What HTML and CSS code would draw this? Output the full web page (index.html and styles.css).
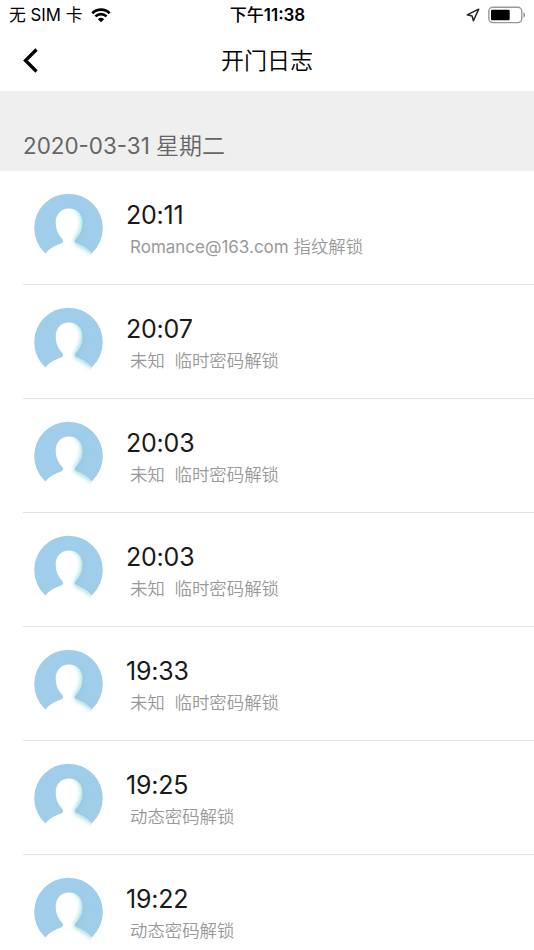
FILE: index.html
```html
<!DOCTYPE html>
<html lang="zh-CN">
<head>
<meta charset="UTF-8" />
<meta name="viewport" content="width=device-width, initial-scale=1" />
<title>开门日志</title>
<link rel="stylesheet" href="styles.css">
</head>
<body>

<!-- shared avatar -->
<svg class="defs" width="0" height="0">
  <defs>
    <filter id="glow" x="-30%" y="-30%" width="160%" height="160%">
      <feGaussianBlur stdDeviation="2" />
    </filter>
    <path id="person" d="M35 15.500c8 0 13.300 6 13.300 14 0 8-3.300 12.500-6.300 16-1.600 2-1.600 3.600.3 4.800C47 52 53 54.500 58 61l-2 7H12l-1-7C16 54.500 23 52 27.700 50.300c1.900-1.200 1.900-2.800.3-4.800-3-3.500-6.300-8-6.300-16C21.700 21.500 27 15.500 35 15.500z" />
    <clipPath id="cut"><path d="M0 0H69V61H0z" /></clipPath>
    <clipPath id="inside"><use href="#person" /></clipPath>
    <symbol id="avatar" viewBox="0 0 69 69">
      <g clip-path="url(#cut)">
        <circle cx="34.500" cy="35" r="34.300" fill="#9fcdea" />
        <path d="M37 17c8 0 13 6 13 14s-4 13-6 16v4c3 4 7 4 11 9H36z" fill="#8ccbd8" opacity="0.6" filter="url(#glow)" />
      </g>
      <use href="#person" fill="#fff" />
      <g clip-path="url(#inside)">
        <path d="M40 14c6 2 9.500 8 9.500 15.500 0 8-3.800 12.500-6.300 16.500-1.300 2.300-1 3 .6 4C47 51.500 53 53.500 59 60" fill="none" stroke="#a5dcdf" stroke-width="5" filter="url(#glow)" />
      </g>
    </symbol>
  </defs>
</svg>

<div class="status">
  <div class="carrier">
    <span>无 SIM 卡</span>
    <svg class="wifi" width="20" height="15" viewBox="0 0 20 15">
      <path d="M1.300 5.200a12.300 12.300 0 0 1 17.400 0M4.400 8.400a8 8 0 0 1 11.200 0" fill="none" stroke="#000" stroke-width="2.700" />
      <path d="M10 14.300l-3.100-3.100a4.500 4.500 0 0 1 6.200 0z" />
    </svg>
  </div>
  <div class="clock">下午<b>11:38</b></div>
  <div class="indicators">
    <svg width="14" height="14" viewBox="0 0 14 14">
      <path d="M12.700 1.200L1.200 6.800l4.900 1.100 1.300 4.900z" fill="none" stroke="#222" stroke-width="1.500" stroke-linejoin="round" />
    </svg>
    <svg width="38" height="18" viewBox="0 0 38 18">
      <rect x="0.800" y="1.300" width="33" height="15.300" rx="4" fill="none" stroke="#999" stroke-width="1.400" />
      <rect x="3" y="3.700" width="18.700" height="10.600" rx="1.200" />
      <path d="M35.500 6.500c2 .6 2 4.400 0 5z" fill="#888" />
    </svg>
  </div>
</div>

<div class="nav">
  <svg class="back" width="16" height="26" viewBox="0 0 16 26">
    <path d="M13.500 1.500L2.500 12.500l11 11" fill="none" stroke="#000" stroke-width="3.300" />
  </svg>
  <h1>开门日志</h1>
</div>

<h2 class="date">2020-03-31 <span>星期二</span></h2>

<ul class="log">
  <li>
    <svg class="avatar"><use href="#avatar" /></svg>
    <div class="entry"><div class="time">20:11</div><div class="detail"><span class="mail">Romance@163.com</span> 指纹解锁</div></div>
  </li>
  <li>
    <svg class="avatar"><use href="#avatar" /></svg>
    <div class="entry"><div class="time">20:07</div><div class="detail">未知&nbsp; 临时密码解锁</div></div>
  </li>
  <li>
    <svg class="avatar"><use href="#avatar" /></svg>
    <div class="entry"><div class="time">20:03</div><div class="detail">未知&nbsp; 临时密码解锁</div></div>
  </li>
  <li>
    <svg class="avatar"><use href="#avatar" /></svg>
    <div class="entry"><div class="time">20:03</div><div class="detail">未知&nbsp; 临时密码解锁</div></div>
  </li>
  <li>
    <svg class="avatar"><use href="#avatar" /></svg>
    <div class="entry"><div class="time">19:33</div><div class="detail">未知&nbsp; 临时密码解锁</div></div>
  </li>
  <li>
    <svg class="avatar"><use href="#avatar" /></svg>
    <div class="entry"><div class="time">19:25</div><div class="detail">动态密码解锁</div></div>
  </li>
  <li>
    <svg class="avatar"><use href="#avatar" /></svg>
    <div class="entry"><div class="time">19:22</div><div class="detail">动态密码解锁</div></div>
  </li>
</ul>

</body>
</html>
```
FILE: styles.css
```css
* { box-sizing: border-box; }
body { margin: 0; height: 950px; overflow: hidden; background: #fff; color: #000; font-family: Inter, "Noto Sans CJK SC", sans-serif; }
.defs { position: absolute; }

.status { display: grid; grid-template-columns: 1fr auto 1fr; align-items: center; height: 30px; padding: 0 8px 0 9px; font-size: 16.8px; line-height: 30px; }
.carrier { display: flex; align-items: center; gap: 9px; }
.carrier, .clock { white-space: nowrap; }
.clock { font-weight: 500; font-size: 17px; }
.clock b { font-weight: 600; }
.indicators { display: flex; justify-content: flex-end; align-items: center; gap: 8px; }

.nav { display: grid; grid-template-columns: 60px 1fr 60px; align-items: center; height: 61px; }
.back { margin-left: 23px; }
h1 { margin: 0; text-align: center; font-size: 23px; line-height: 34px; font-weight: 350; }

.date { height: 80px; margin: 0; padding: 38px 23px 0; background: #efefef; color: #666; font-size: 22.4px; line-height: 34px; font-weight: 400; }
.date span { font-size: 23px; font-weight: 350; }

.log { margin: 0; padding: 0 0 0 23px; list-style: none; }
.log li { display: flex; height: 114px; padding: 22px 0 0 11px; border-bottom: 1px solid #e2e2e2; }
.avatar { flex: none; width: 69px; height: 69px; }
.entry { margin-left: 23px; padding-top: 5px; }
.time { font-size: 25px; line-height: 34px; letter-spacing: -0.2px; color: #1a1a1a; }
.detail { padding-left: 4px; font-size: 17.4px; line-height: 29px; color: #999; font-weight: 350; white-space: nowrap; }
.mail { font-size: 17px; font-weight: 400; }
```
